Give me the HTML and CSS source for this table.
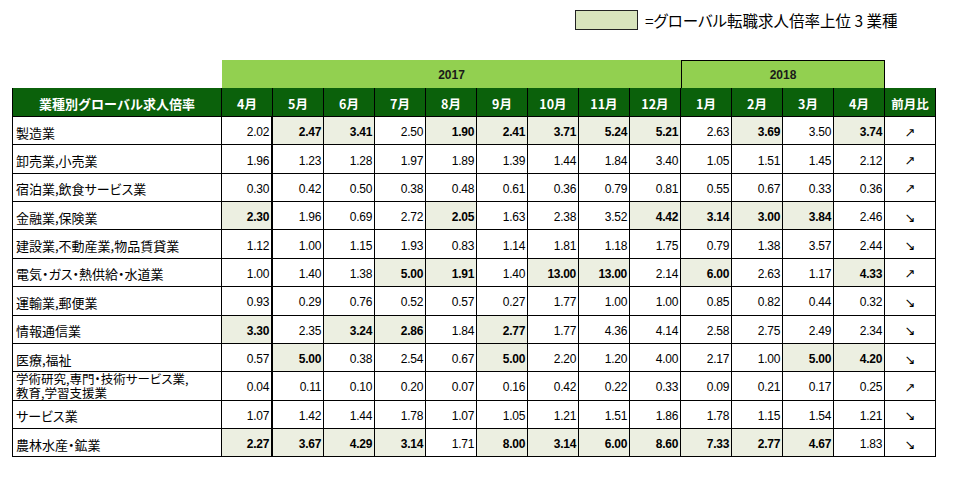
FILE: index.html
```html
<!DOCTYPE html>
<html lang="ja">
<head>
<meta charset="utf-8">
<link rel="stylesheet" href="styles.css">
</head>
<body>
<div class="page">
  <div class="legend">
    <span class="swatch"></span>
    <span class="legend-text">=グローバル転職求人倍率上位 3 業種</span>
  </div>
  <div class="grid">
    <div class="blank"></div>
    <div class="year y2017">2017</div>
    <div class="year y2018">2018</div>
    <div class="blank"></div>

    <div class="hd first">業種別グローバル求人倍率</div>
    <div class="hd">4月</div><div class="hd">5月</div><div class="hd">6月</div><div class="hd">7月</div><div class="hd">8月</div><div class="hd">9月</div><div class="hd">10月</div><div class="hd">11月</div><div class="hd">12月</div><div class="hd">1月</div><div class="hd">2月</div><div class="hd">3月</div><div class="hd">4月</div><div class="hd">前月比</div>

    <div class="lbl">製造業</div>
    <div class="n c1">2.02</div><div class="n hi">2.47</div><div class="n hi">3.41</div><div class="n">2.50</div><div class="n hi">1.90</div><div class="n hi">2.41</div><div class="n hi">3.71</div><div class="n hi">5.24</div><div class="n hi">5.21</div><div class="n">2.63</div><div class="n hi">3.69</div><div class="n">3.50</div><div class="n hi">3.74</div><div class="ar">↗</div>

    <div class="lbl">卸売業,小売業</div>
    <div class="n c1">1.96</div><div class="n">1.23</div><div class="n">1.28</div><div class="n">1.97</div><div class="n">1.89</div><div class="n">1.39</div><div class="n">1.44</div><div class="n">1.84</div><div class="n">3.40</div><div class="n">1.05</div><div class="n">1.51</div><div class="n">1.45</div><div class="n">2.12</div><div class="ar">↗</div>

    <div class="lbl">宿泊業,飲食サービス業</div>
    <div class="n c1">0.30</div><div class="n">0.42</div><div class="n">0.50</div><div class="n">0.38</div><div class="n">0.48</div><div class="n">0.61</div><div class="n">0.36</div><div class="n">0.79</div><div class="n">0.81</div><div class="n">0.55</div><div class="n">0.67</div><div class="n">0.33</div><div class="n">0.36</div><div class="ar">↗</div>

    <div class="lbl">金融業,保険業</div>
    <div class="n c1 hi">2.30</div><div class="n">1.96</div><div class="n">0.69</div><div class="n">2.72</div><div class="n hi">2.05</div><div class="n">1.63</div><div class="n">2.38</div><div class="n">3.52</div><div class="n hi">4.42</div><div class="n hi">3.14</div><div class="n hi">3.00</div><div class="n hi">3.84</div><div class="n">2.46</div><div class="ar">↘</div>

    <div class="lbl">建設業,不動産業,物品賃貸業</div>
    <div class="n c1">1.12</div><div class="n">1.00</div><div class="n">1.15</div><div class="n">1.93</div><div class="n">0.83</div><div class="n">1.14</div><div class="n">1.81</div><div class="n">1.18</div><div class="n">1.75</div><div class="n">0.79</div><div class="n">1.38</div><div class="n">3.57</div><div class="n">2.44</div><div class="ar">↘</div>

    <div class="lbl">電気・ガス・熱供給・水道業</div>
    <div class="n c1">1.00</div><div class="n">1.40</div><div class="n">1.38</div><div class="n hi">5.00</div><div class="n hi">1.91</div><div class="n">1.40</div><div class="n hi">13.00</div><div class="n hi">13.00</div><div class="n">2.14</div><div class="n hi">6.00</div><div class="n">2.63</div><div class="n">1.17</div><div class="n hi">4.33</div><div class="ar">↗</div>

    <div class="lbl">運輸業,郵便業</div>
    <div class="n c1">0.93</div><div class="n">0.29</div><div class="n">0.76</div><div class="n">0.52</div><div class="n">0.57</div><div class="n">0.27</div><div class="n">1.77</div><div class="n">1.00</div><div class="n">1.00</div><div class="n">0.85</div><div class="n">0.82</div><div class="n">0.44</div><div class="n">0.32</div><div class="ar">↘</div>

    <div class="lbl">情報通信業</div>
    <div class="n c1 hi">3.30</div><div class="n">2.35</div><div class="n hi">3.24</div><div class="n hi">2.86</div><div class="n">1.84</div><div class="n hi">2.77</div><div class="n">1.77</div><div class="n">4.36</div><div class="n">4.14</div><div class="n">2.58</div><div class="n">2.75</div><div class="n">2.49</div><div class="n">2.34</div><div class="ar">↘</div>

    <div class="lbl">医療,福祉</div>
    <div class="n c1">0.57</div><div class="n hi">5.00</div><div class="n">0.38</div><div class="n">2.54</div><div class="n">0.67</div><div class="n hi">5.00</div><div class="n">2.20</div><div class="n">1.20</div><div class="n">4.00</div><div class="n">2.17</div><div class="n">1.00</div><div class="n hi">5.00</div><div class="n hi">4.20</div><div class="ar">↘</div>

    <div class="lbl two">学術研究,専門・技術サービス業,<br>教育,学習支援業</div>
    <div class="n c1">0.04</div><div class="n">0.11</div><div class="n">0.10</div><div class="n">0.20</div><div class="n">0.07</div><div class="n">0.16</div><div class="n">0.42</div><div class="n">0.22</div><div class="n">0.33</div><div class="n">0.09</div><div class="n">0.21</div><div class="n">0.17</div><div class="n">0.25</div><div class="ar">↗</div>

    <div class="lbl">サービス業</div>
    <div class="n c1">1.07</div><div class="n">1.42</div><div class="n">1.44</div><div class="n">1.78</div><div class="n">1.07</div><div class="n">1.05</div><div class="n">1.21</div><div class="n">1.51</div><div class="n">1.86</div><div class="n">1.78</div><div class="n">1.15</div><div class="n">1.54</div><div class="n">1.21</div><div class="ar">↘</div>

    <div class="lbl">農林水産・鉱業</div>
    <div class="n c1 hi">2.27</div><div class="n hi">3.67</div><div class="n hi">4.29</div><div class="n hi">3.14</div><div class="n">1.71</div><div class="n hi">8.00</div><div class="n hi">3.14</div><div class="n hi">6.00</div><div class="n hi">8.60</div><div class="n hi">7.33</div><div class="n hi">2.77</div><div class="n hi">4.67</div><div class="n">1.83</div><div class="ar">↘</div>
  </div>
</div>
</body>
</html>
```
FILE: styles.css
```css
html, body {
  margin: 0;
  padding: 0;
  background: #ffffff;
}

.page {
  padding: 10px 0 0 12px;
  font-family: "Liberation Sans", "Noto Sans CJK JP", sans-serif;
  color: #000;
}

.legend {
  display: flex;
  align-items: center;
  margin-left: 563px;
  height: 20px;
  margin-bottom: 30px;
}

.swatch {
  width: 61px;
  height: 18px;
  background: #d8e4bc;
  border: 1px solid #222;
}

.legend-text {
  margin-left: 7px;
  font-family: "Noto Sans CJK JP", sans-serif;
  font-size: 15.5px;
  font-feature-settings: "palt";
  line-height: 20px;
}

.grid {
  display: grid;
  grid-template-columns: 210px repeat(14, 51px);
  grid-template-rows: 28px 29px repeat(12, 28.36px);
  width: 924px;
}

.grid > div {
  box-sizing: border-box;
  display: flex;
  align-items: center;
  overflow: hidden;
  white-space: nowrap;
}

.year {
  background: #92d050;
  justify-content: center;
  font-weight: bold;
  font-size: 12px;
  color: #1a1a1a;
  padding-top: 1px;
}

.y2017 {
  grid-column: span 9;
}

.y2018 {
  grid-column: span 4;
  border: 1px solid #000;
  border-bottom: none;
}

.hd {
  background: #0b610b;
  color: #fff;
  font-family: "Noto Sans CJK JP", sans-serif;
  font-weight: bold;
  font-size: 12.5px;
  justify-content: center;
  border-right: 1px solid #000;
  border-bottom: 1px solid #000;
  padding-top: 2px;
}

.hd.first {
  border-left: 1px solid #000;
  font-size: 13px;
}

.lbl {
  font-family: "Noto Sans CJK JP", sans-serif;
  font-size: 13px;
  font-feature-settings: "palt";
  padding-left: 3px;
  padding-top: 3px;
  border-left: 1px solid #000;
  border-right: 1px solid #000;
  border-bottom: 1px solid #000;
}

.grid > .lbl.two {
  align-items: center;
  font-size: 12.5px;
  line-height: 13.5px;
  padding-top: 0;
  overflow: visible;
}

.n {
  font-size: 12px;
  justify-content: flex-end;
  padding-right: 2px;
  padding-top: 3px;
  border-right: 1px solid #000;
  border-bottom: 1px solid #000;
  letter-spacing: -0.3px;
}

.n.c1 {
  border-right: 2px solid #000;
}

.n.hi {
  background: #ecefe1;
  font-weight: bold;
}

.ar {
  font-family: "DejaVu Sans", sans-serif;
  font-size: 13px;
  justify-content: center;
  padding-top: 3px;
  border-right: 1px solid #000;
  border-bottom: 1px solid #000;
}
```
